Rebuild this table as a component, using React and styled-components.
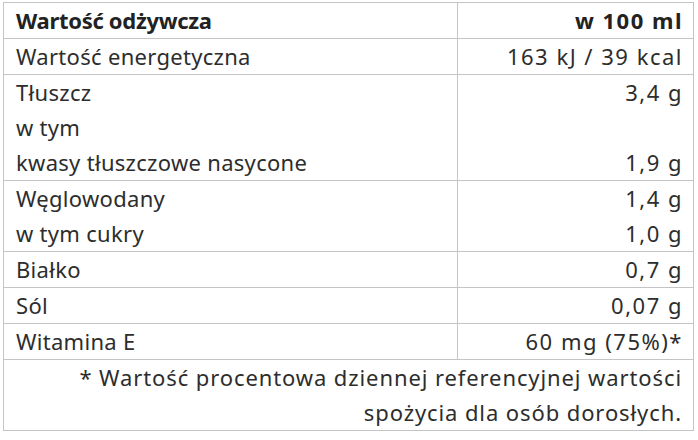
import styled, { createGlobalStyle } from "styled-components";

const Global = createGlobalStyle`
  body {
    margin: 0;
    background: #fff;
    font-family: "Noto Sans", "Open Sans", sans-serif;
  }
`;

const Wrap = styled.div`
  padding: 2px 5px 0 3px;
`;

const Table = styled.table`
  width: 691px;
  border-collapse: collapse;
  font-size: 22px;
  line-height: 35px;
  color: #2d2d2d;
`;

const Cell = styled.td`
  border: 1px solid #c4c4c4;
  padding: ${(p) => (p.$right ? "0 10px 0 12px" : "0 11px 0 12px")};
  text-align: ${(p) => (p.$right ? "right" : "left")};
  vertical-align: top;
  font-weight: ${(p) => (p.$bold ? 700 : 400)};
  color: ${(p) => (p.$bold ? "#222" : "inherit")};
  letter-spacing: ${(p) =>
    p.$right ? "1.5px" : p.$bold ? "-0.3px" : "0.3px"};
  width: ${(p) => p.$w || "auto"};
`;

const Note = styled.td`
  border: 1px solid #c4c4c4;
  padding: 0 11px 0 12px;
  text-align: right;
  letter-spacing: 0.9px;
`;

const rows = [
  { name: ["Wartość energetyczna"], value: ["163 kJ / 39 kcal"] },
  { name: ["Tłuszcz", "w tym", "kwasy tłuszczowe nasycone"], value: ["3,4 g", "", "1,9 g"] },
  { name: ["Węglowodany", "w tym cukry"], value: ["1,4 g", "1,0 g"] },
  { name: ["Białko"], value: ["0,7 g"] },
  { name: ["Sól"], value: ["0,07 g"] },
  { name: ["Witamina E"], value: ["60 mg (75%)*"] },
];

const Lines = ({ items }) =>
  items.map((t, i) => (
    <div key={i}>{t || "\u00a0"}</div>
  ));

export default function App() {
  return (
    <Wrap>
      <Global />
      <Table>
        <tbody>
          <tr>
            <Cell $bold $w="430px">Wartość odżywcza</Cell>
            <Cell $bold $right>w 100 ml</Cell>
          </tr>
          {rows.map((r) => (
            <tr key={r.name[0]}>
              <Cell>
                <Lines items={r.name} />
              </Cell>
              <Cell $right>
                <Lines items={r.value} />
              </Cell>
            </tr>
          ))}
          <tr>
            <Note colSpan={2}>
              * Wartość procentowa dziennej referencyjnej wartości
              <br />
              spożycia dla osób dorosłych.
            </Note>
          </tr>
        </tbody>
      </Table>
    </Wrap>
  );
}
